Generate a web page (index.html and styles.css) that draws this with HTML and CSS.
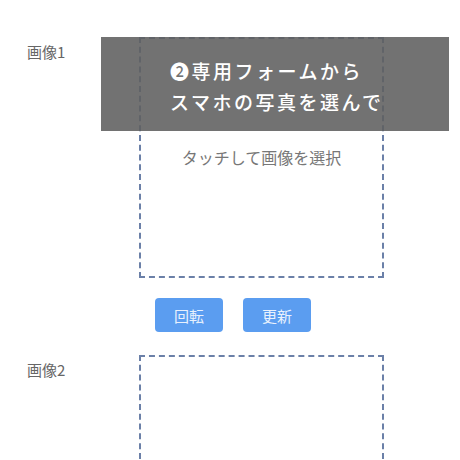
FILE: index.html
```html
<!DOCTYPE html>
<html lang="ja">
<head>
<meta charset="UTF-8">
<meta name="viewport" content="width=device-width, initial-scale=1.0">
<title>画像アップロード</title>
<link rel="stylesheet" href="styles.css">
</head>
<body>

<div class="container">
    <div class="field">
        <div class="label">画像1</div>
        <div class="body">
            <div class="dropzone">
                <p class="hint">タッチして画像を選択</p>
            </div>
            <div class="actions">
                <button class="btn">回転</button>
                <button class="btn">更新</button>
            </div>
        </div>
    </div>

    <div class="field">
        <div class="label">画像2</div>
        <div class="body">
            <div class="dropzone"></div>
        </div>
    </div>

    <div class="banner">
        <p>❷専用フォームから</p>
        <p>スマホの写真を選んで</p>
    </div>
</div>

</body>
</html>
```

FILE: styles.css
```css
body {
    font-family: "Noto Sans CJK JP", "Noto Sans", sans-serif;
    margin: 0;
    padding: 0;
    background: #fff;
}
.container {
    position: relative;
    padding-top: 37px;
}
.field {
    display: flex;
    margin-bottom: 23px;
}
.label {
    width: 139px;
    box-sizing: border-box;
    padding-left: 27px;
    padding-top: 4px;
    font-size: 15px;
    color: #666;
}
.dropzone {
    width: 245px;
    height: 241px;
    box-sizing: border-box;
    border: 2px dashed #6b80a8;
}
.hint {
    margin: 0;
    padding-top: 106px;
    text-align: center;
    font-size: 16px;
    color: #777;
}
.actions {
    display: flex;
    gap: 20px;
    margin-top: 20px;
    padding-left: 16px;
}
.btn {
    width: 68px;
    height: 34px;
    border: none;
    border-radius: 4px;
    background-color: #5b9df0;
    color: #e8f1fd;
    font-family: inherit;
    font-size: 15px;
}
.banner {
    position: absolute;
    left: 101px;
    top: 37px;
    width: 348px;
    height: 94px;
    box-sizing: border-box;
    padding: 18px 0 0 69px;
    background: rgba(95, 95, 95, 0.88);
    color: #fff;
    font-size: 19px;
    font-weight: 500;
    letter-spacing: 2.5px;
}
.banner p {
    margin: 0;
    line-height: 31px;
    white-space: nowrap;
}
```
